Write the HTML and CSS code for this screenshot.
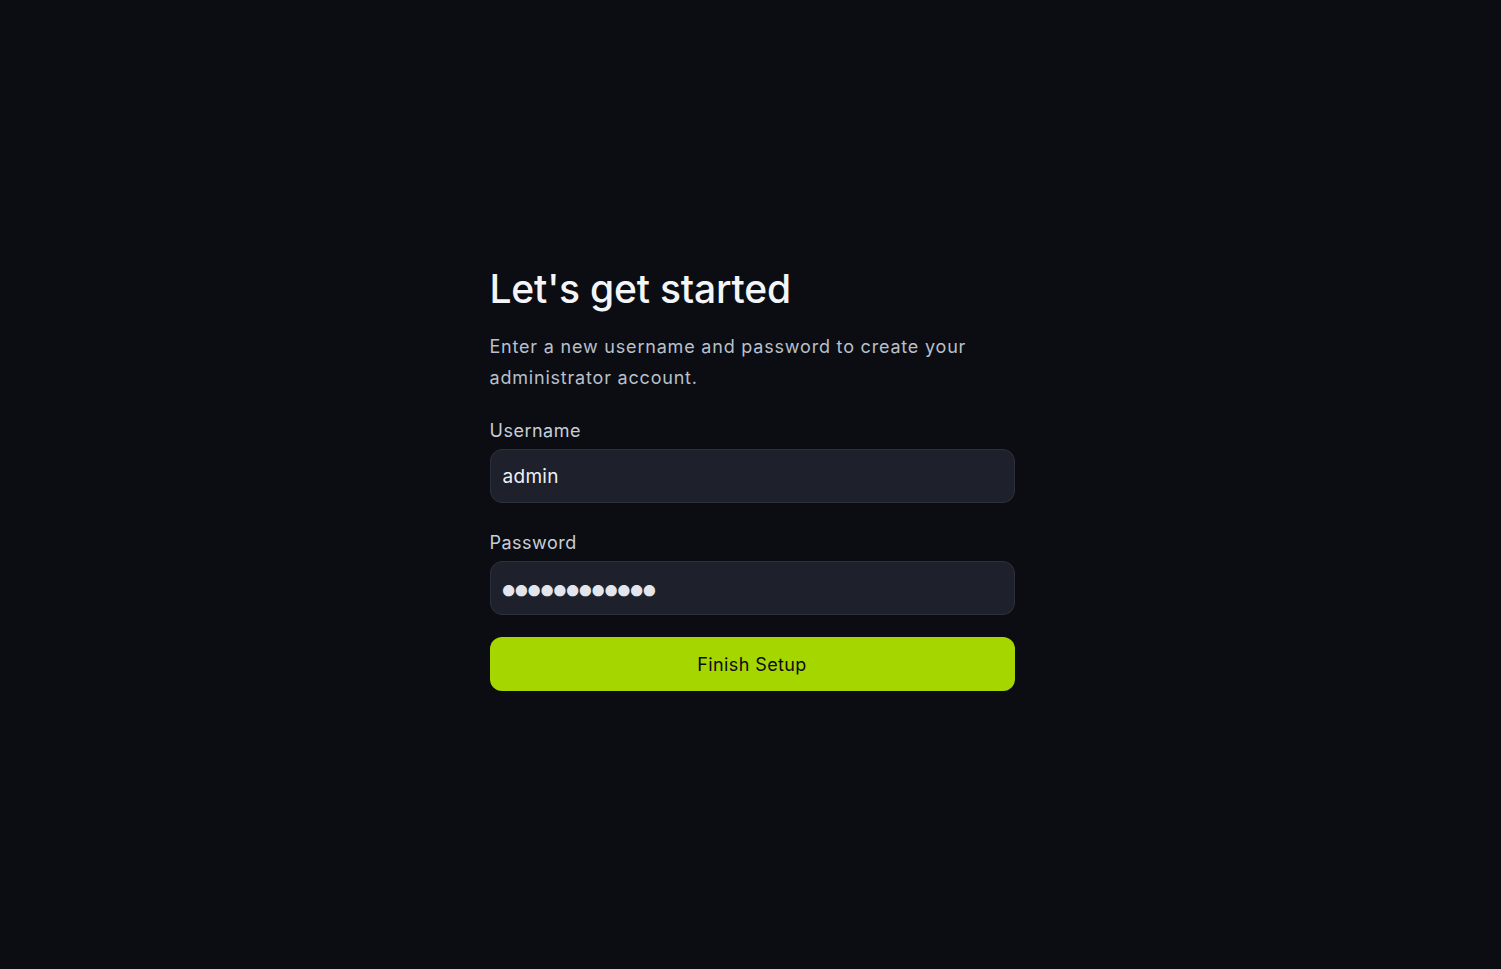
FILE: index.html
```html
<!DOCTYPE html>
<html lang="en">
<head>
<meta charset="UTF-8">
<meta name="viewport" content="width=device-width, initial-scale=1.0">
<title>Setup</title>
<link rel="stylesheet" href="styles.css">
</head>
<body>
  <main class="page">
    <form class="setup" id="setupForm">
      <h1>Let's get started</h1>
      <p class="intro">Enter a new username and password to create your administrator account.</p>

      <label for="username">Username</label>
      <input type="text" id="username" name="username" value="admin">

      <label for="password">Password</label>
      <input type="password" id="password" name="password" value="supersecret1">

      <button type="button">Finish Setup</button>
    </form>
  </main>
</body>
</html>
```

FILE: styles.css
```css
html, body {
  height: 100%;
}
body {
  margin: 0;
  background-color: #0b0d12;
  font-family: Inter, "Noto Sans", sans-serif;
  color: #c4cad4;
}
.page {
  min-height: 100%;
  display: flex;
  align-items: center;
  justify-content: center;
}
.setup {
  width: 525px;
  display: flex;
  flex-direction: column;
  margin: 0 0 11px 3px;
}
.setup h1 {
  margin: 0 0 20px;
  font-size: 39px;
  font-weight: 500;
  letter-spacing: -0.2px;
  color: #f3f5f8;
  line-height: 44px;
}
.intro {
  margin: 0 0 26px;
  font-size: 18px;
  line-height: 31px;
  letter-spacing: 0.8px;
  color: #b9c0cb;
}
label {
  font-size: 18px;
  line-height: 24px;
  letter-spacing: 0.5px;
  margin-bottom: 6px;
  color: #c8cdd6;
}
input[type="text"], input[type="password"] {
  height: 54px;
  padding: 0 12px;
  margin-bottom: 28px;
  border: 1px solid #2b303c;
  border-radius: 12px;
  background-color: #1e212c;
  color: #eef1f5;
  font-family: inherit;
  font-size: 19px;
  letter-spacing: 0.3px;
  box-sizing: border-box;
  outline: none;
}
input[type="password"] {
  margin-bottom: 22px;
  font-size: 36px;
  letter-spacing: -7.45px;
  padding-left: 8px;
  color: #e2e6ec;
}
button {
  height: 54px;
  border: none;
  border-radius: 12px;
  background-color: #a6d600;
  color: #0b0d12;
  font-family: inherit;
  font-size: 18px;
  letter-spacing: 0.4px;
  cursor: pointer;
}
```
